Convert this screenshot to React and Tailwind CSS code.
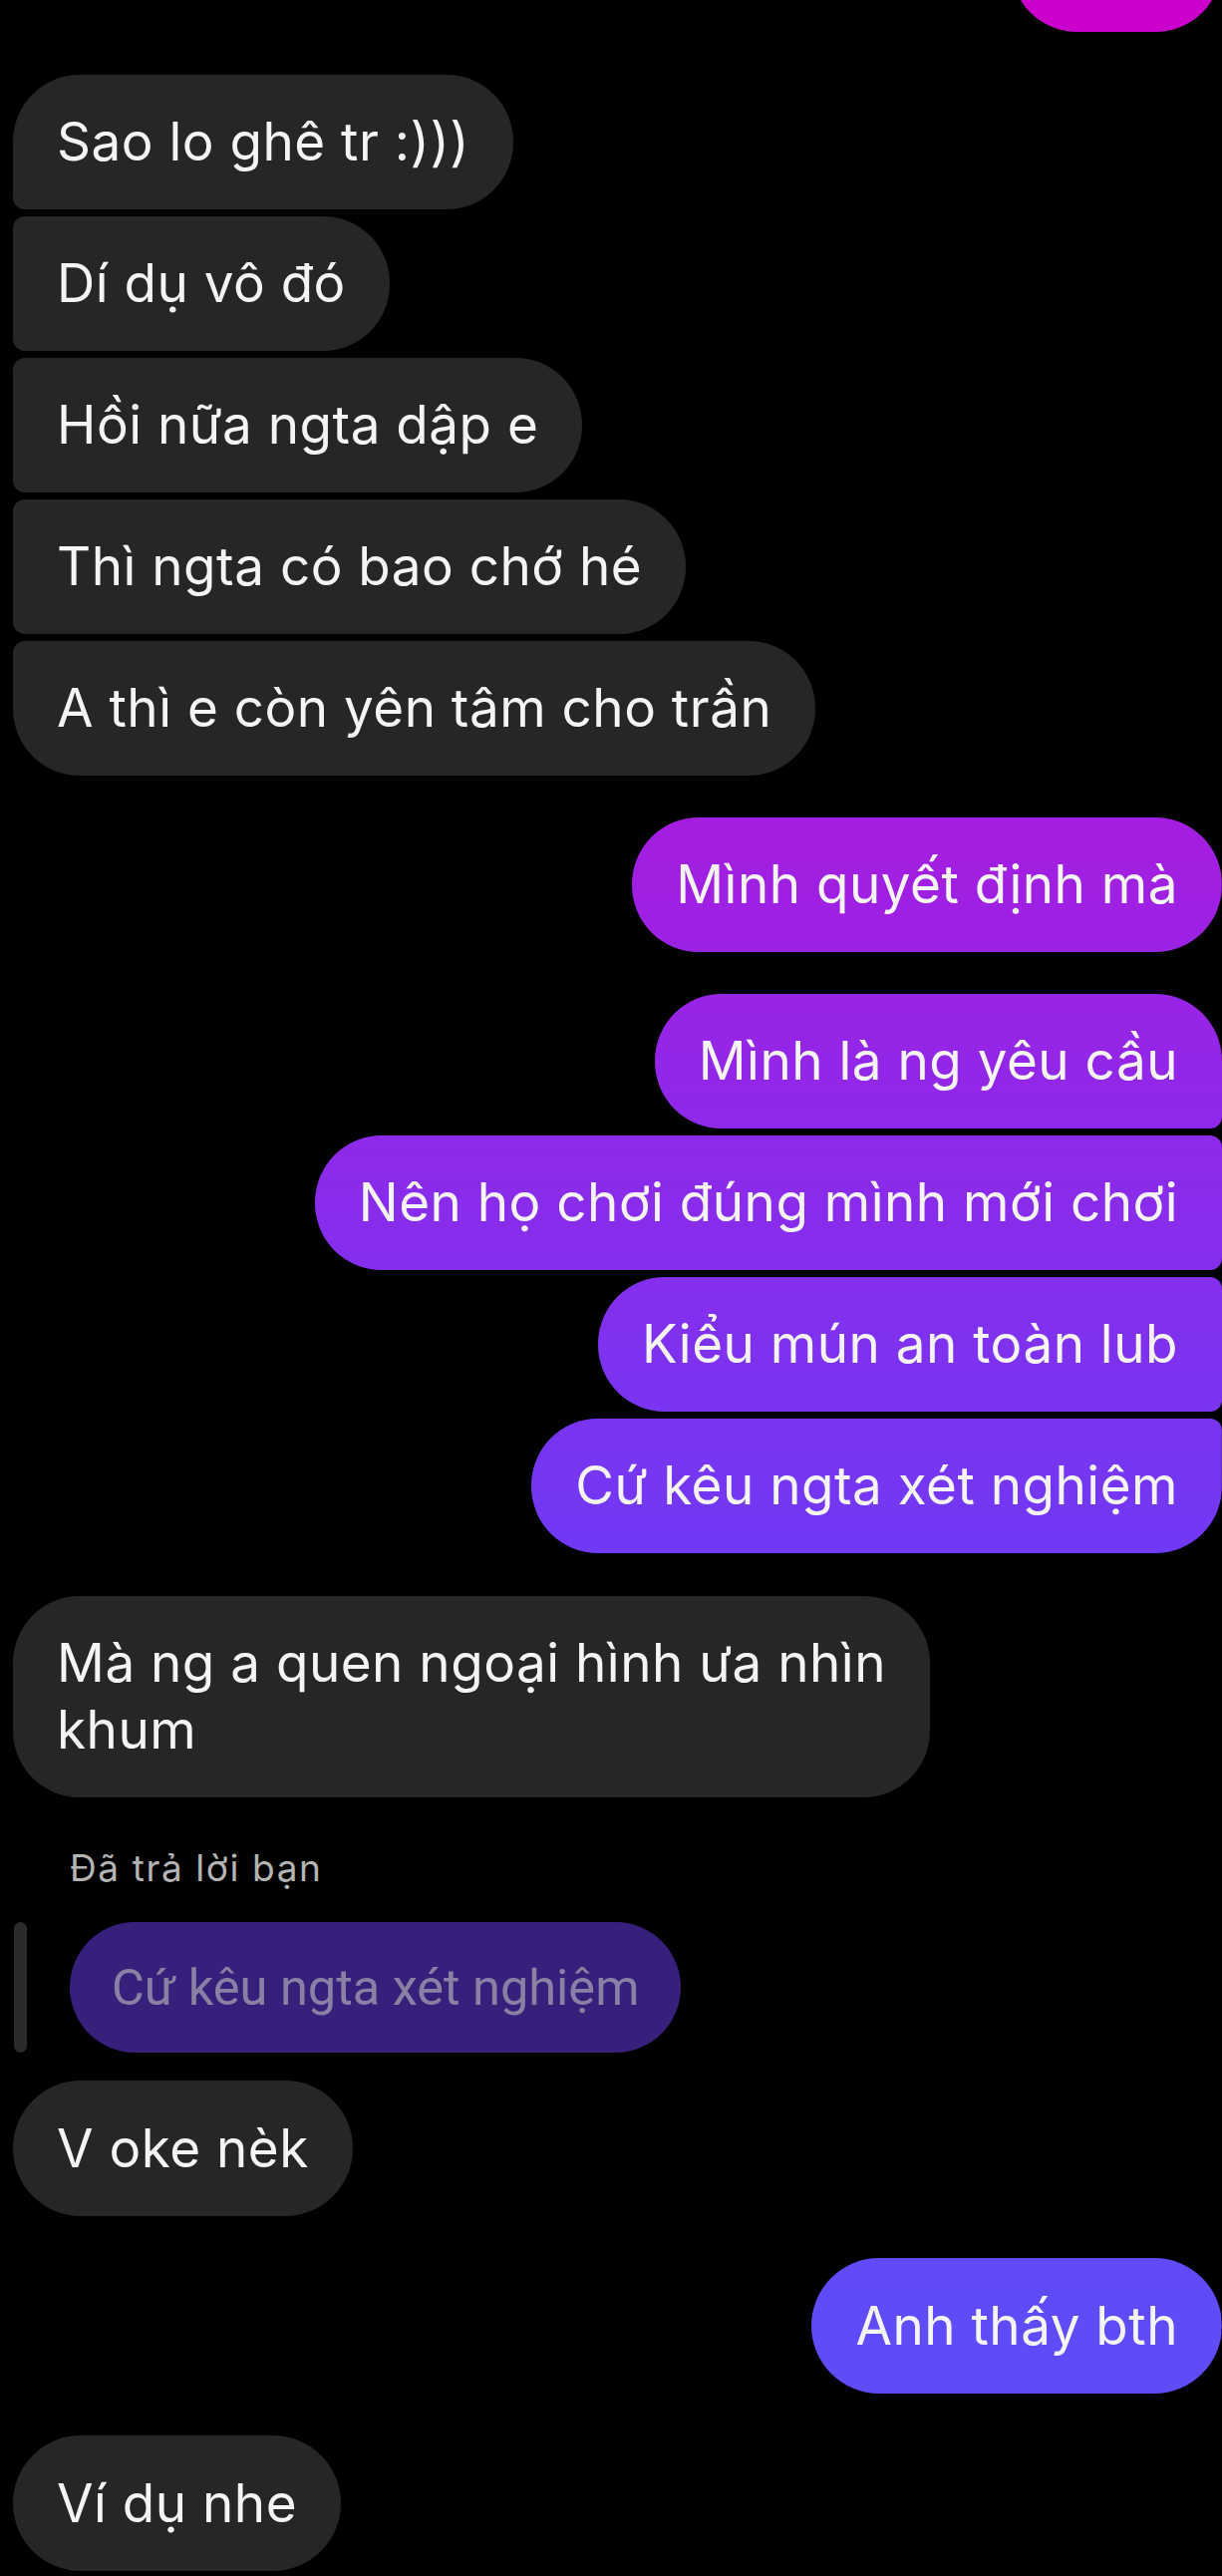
export default function App() {
  const grad =
    "bg-[linear-gradient(180deg,#cc00cc_0px,#a51de0_820px,#7039f4_1560px,#5f4bf8_2333px)] bg-fixed";
  const dark = "bg-[#262626]";
  const base =
    "px-[44px] py-[34px] font-['Inter','Roboto',sans-serif] text-[53px] tracking-[0.5px] leading-[67px] text-[#f4f4f4] whitespace-nowrap";
  const base2 =
    "px-[44px] py-[34px] font-['Inter','Roboto',sans-serif] text-[53px] tracking-[0.5px] leading-[68px] text-[#f4f4f4] whitespace-nowrap";

  return (
    <div className="w-[1226px] h-[2584px] overflow-hidden bg-black font-['Roboto','Noto_Sans',sans-serif]">
      <div className="flex flex-col">
        {/* top partially visible bubble */}
        <div className="self-end mt-[-103px] w-[212px] h-[135px] rounded-[67px] bg-[#cc00cc]" />

        {/* left group */}
        <div className="mt-[43px] ml-[13px] flex flex-col items-start gap-[7px]">
          <div className={`${dark} ${base} rounded-tl-[67px] rounded-bl-[12px] rounded-r-[67px]`}>Sao lo ghê tr :)))</div>
          <div className={`${dark} ${base} rounded-l-[12px] rounded-r-[67px]`}>Dí dụ vô đó</div>
          <div className={`${dark} ${base} rounded-l-[12px] rounded-r-[67px]`}>Hồi nữa ngta dập e</div>
          <div className={`${dark} ${base} rounded-l-[12px] rounded-r-[67px]`}>Thì ngta có bao chớ hé</div>
          <div className={`${dark} ${base} rounded-tl-[12px] rounded-bl-[67px] rounded-r-[67px]`}>A thì e còn yên tâm cho trần</div>
        </div>

        {/* right single */}
        <div className="mt-[42px] flex flex-col items-end">
          <div className={`${grad} ${base} rounded-[67px]`}>Mình quyết định mà</div>
        </div>

        {/* right group */}
        <div className="mt-[42px] flex flex-col items-end gap-[7px]">
          <div className={`${grad} ${base} rounded-l-[67px] rounded-tr-[67px] rounded-br-[12px]`}>Mình là ng yêu cầu</div>
          <div className={`${grad} ${base} rounded-l-[67px] rounded-r-[12px]`}>Nên họ chơi đúng mình mới chơi</div>
          <div className={`${grad} ${base} rounded-l-[67px] rounded-r-[12px]`}>Kiểu mún an toàn lub</div>
          <div className={`${grad} ${base} rounded-l-[67px] rounded-tr-[12px] rounded-br-[67px]`}>Cứ kêu ngta xét nghiệm</div>
        </div>

        {/* left two-line */}
        <div className="mt-[43px] ml-[13px] flex flex-col items-start">
          <div className={`${dark} ${base} rounded-[67px]`}>
            Mà ng a quen ngoại hình ưa nhìn
            <br />
            khum
          </div>
        </div>

        {/* reply */}
        <div className="mt-[45px] ml-[70px] font-['Inter','Roboto',sans-serif] text-[37px] tracking-[1.6px] leading-[52px] text-[#b4b4b4]">Đã trả lời bạn</div>
        <div className="mt-[28px] ml-[14px] flex items-stretch gap-[43px]">
          <div className="w-[13px] rounded-full bg-[#2b2b2b]" />
          <div className="pl-[42px] pr-[42px] py-[32px] text-[50.5px] leading-[67px] text-[#8a80a4] whitespace-nowrap rounded-[67px] bg-[#37207b]">
            Cứ kêu ngta xét nghiệm
          </div>
        </div>

        <div className="mt-[28px] ml-[13px] flex flex-col items-start">
          <div className={`${dark} ${base2} rounded-[68px]`}>V oke nèk</div>
        </div>

        <div className="mt-[42px] flex flex-col items-end">
          <div className={`${grad} ${base2} rounded-[68px]`}>Anh thấy bth</div>
        </div>

        <div className="mt-[42px] ml-[13px] flex flex-col items-start">
          <div className={`${dark} ${base2} rounded-[68px]`}>Ví dụ nhe</div>
        </div>
      </div>
    </div>
  );
}
